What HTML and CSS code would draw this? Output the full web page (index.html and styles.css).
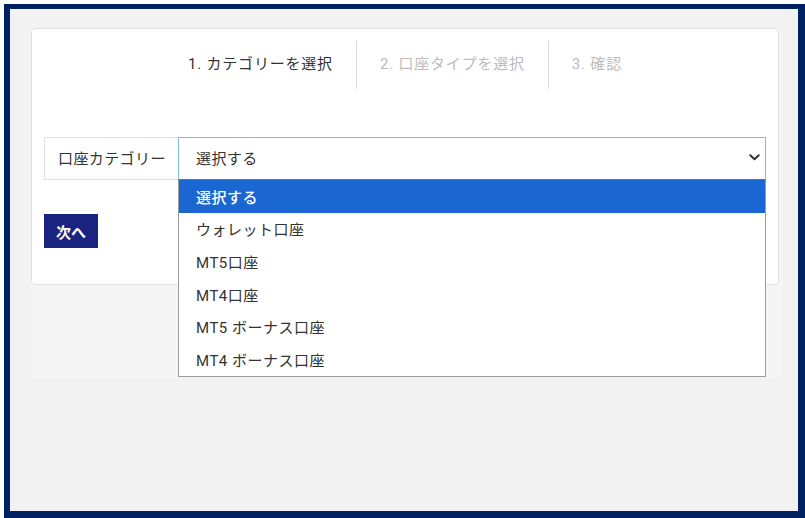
FILE: index.html
```html
<!DOCTYPE html>
<html lang="ja">
<head>
  <meta charset="UTF-8" />
  <meta name="viewport" content="width=device-width, initial-scale=1.0"/>
  <title>口座開設</title>
  <link rel="stylesheet" href="styles.css">
</head>
<body>

  <div class="frame">
    <div class="wrap">
      <div class="card">
        <div class="steps">
          <div class="step active">1. カテゴリーを選択</div>
          <div class="step">2. 口座タイプを選択</div>
          <div class="step">3. 確認</div>
        </div>

        <div class="input-group">
          <div class="group-label">口座カテゴリー</div>
          <div class="select-box">
            <div class="select-field">
              <span>選択する</span>
              <svg class="chevron" width="11" height="7" viewBox="0 0 11 7">
                <path d="M1.3 1.3 L5.5 5.3 L9.7 1.3" fill="none" stroke="#333" stroke-width="2" stroke-linecap="round" stroke-linejoin="round"/>
              </svg>
            </div>
            <ul class="options">
              <li class="selected">選択する</li>
              <li>ウォレット口座</li>
              <li>MT5口座</li>
              <li>MT4口座</li>
              <li>MT5 ボーナス口座</li>
              <li>MT4 ボーナス口座</li>
            </ul>
          </div>
        </div>

        <button class="next-btn">次へ</button>
      </div>
    </div>
  </div>

</body>
</html>
```

FILE: styles.css
```css
body {
  margin: 0;
  padding: 4px 0 0 4px;
  background: #fff;
  font-family: Roboto, "Noto Sans CJK JP", sans-serif;
  color: #333;
}

.frame {
  box-sizing: border-box;
  width: 801px;
  height: 514px;
  border-style: solid;
  border-color: #012061;
  border-width: 5px 7px 7px 6px;
  background: #f2f2f2;
  padding: 19px 0 0 21px;
}

.wrap {
  width: 751px;
  height: 350px;
  background: #f5f5f5;
}

.card {
  box-sizing: border-box;
  width: 748px;
  height: 257px;
  background: #fff;
  border: 1px solid #dde1e5;
  border-radius: 4px;
  padding: 12px 12px 0;
}

.steps {
  display: flex;
  justify-content: center;
}

.step {
  box-sizing: border-box;
  height: 48px;
  display: flex;
  align-items: center;
  padding: 0 23px 5px;
  font-size: 15px;
  letter-spacing: 0.8px;
  color: #bcbcbc;
}

.step + .step {
  border-left: 1px solid #d9d9d9;
}

.step.active {
  color: #333;
}

.input-group {
  display: flex;
  margin-top: 48px;
  height: 43px;
}

.group-label {
  box-sizing: border-box;
  width: 134px;
  border: 1px solid #dde2e6;
  border-right: none;
  padding: 0 0 2px 13px;
  display: flex;
  align-items: center;
  font-size: 15px;
  letter-spacing: 0.4px;
  color: #333;
}

.select-box {
  position: relative;
  flex: 1;
}

.select-field {
  box-sizing: border-box;
  height: 43px;
  border: 1px solid #86b7dc;
  padding: 0 5px 2px 17px;
  display: flex;
  align-items: center;
  justify-content: space-between;
  font-size: 15px;
  letter-spacing: 0.4px;
  color: #333;
}

.options {
  position: absolute;
  top: 42px;
  left: 0;
  right: 0;
  margin: 0;
  padding: 0;
  list-style: none;
  background: #fff;
  border: 1px solid #9d9d9d;
  border-top-color: #6f6f6f;
}

.options li {
  height: 32.6px;
  display: flex;
  align-items: center;
  padding-left: 17px;
  font-size: 15px;
  letter-spacing: 0.5px;
  color: #333;
}

.options li.selected {
  background: #1a67d2;
  color: #fff;
  font-weight: 500;
}

.next-btn {
  margin-top: 34px;
  width: 54px;
  height: 34px;
  border: none;
  background: #1b2380;
  color: #fff;
  font-family: inherit;
  font-size: 15px;
  font-weight: 700;
  padding: 0;
}
```
